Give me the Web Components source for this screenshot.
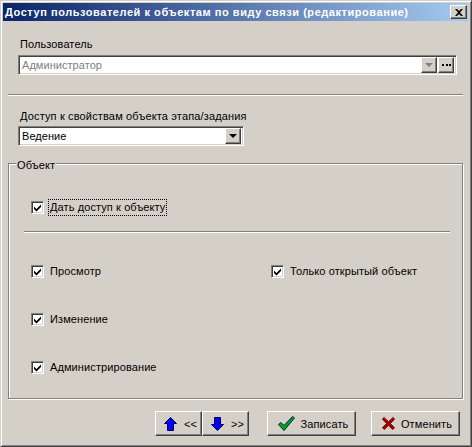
<!DOCTYPE html>
<html>
<head>
<meta charset="utf-8">
<style>
  html, body { margin: 0; padding: 0; background: #d4d0c8; }
  body { font: 11px "Liberation Sans", sans-serif; color: #000; }
</style>
</head>
<body>
<win-dialog caption="Доступ пользователей к объектам по виду связи (редактирование)">
  <win-label>Пользователь</win-label>
  <win-combo value="Администратор" disabled more style="width:439px;margin-top:4px"></win-combo>
  <win-sep style="margin:19px 7px 0 -10px"></win-sep>
  <win-label style="margin-top:14px;letter-spacing:.15px">Доступ к свойствам объекта этапа/задания</win-label>
  <win-combo value="Ведение" style="width:226px;margin-top:3px"></win-combo>
  <win-group caption="Объект" style="margin:17px 7px 0 -10px">
    <win-check focused>Дать доступ к объекту</win-check>
    <win-sep class="inner"></win-sep>
    <div class="rows">
      <win-check>Просмотр</win-check>
      <win-check>Только открытый объект</win-check>
      <win-check>Изменение</win-check>
      <span></span>
      <win-check>Администрирование</win-check>
    </div>
  </win-group>
  <footer>
    <win-button kind="up">&lt;&lt;</win-button>
    <win-button kind="down">&gt;&gt;</win-button>
    <win-button kind="ok" class="wide">Записать</win-button>
    <win-button kind="cancel" class="wide">Отменить</win-button>
  </footer>
  <style>
    win-dialog .rows { display: grid; grid-template-columns: 240px 1fr; grid-auto-rows: 48px; margin: 31px 0 0 22px; }
    win-dialog footer { display: flex; margin: 12px 0 0 137px; }
    win-dialog footer .wide { width: 89px; margin-left: 18px; padding-left: 3px; gap: 6px; }
    win-dialog footer .wide + .wide { margin-left: 15px; }
    win-sep.inner { margin: 13px 12px 0 15px; }
    win-group > win-check { margin: 36px 0 0 22px; }
  </style>
</win-dialog>

<script>
const ICONS = {
  up: '<svg width="13" height="14" viewBox="0 0 13 14"><path d="M6.500 0.500 12.500 6.500H9.500V13.500H3.500V6.500H0.500Z" fill="#00f" stroke="#000050" stroke-width="1"/></svg>',
  down: '<svg width="13" height="14" viewBox="0 0 13 14"><path d="M3.500 0.500H9.500V7.500H12.500L6.500 13.500 0.500 7.500H3.500Z" fill="#00f" stroke="#000050" stroke-width="1"/></svg>',
  ok: '<svg width="17" height="15" viewBox="0 0 17 15"><path d="M0.500 8.500 3 6.500 6 9.500 14.500 0.500 16.500 2 6 14.500Z" fill="#00a800" stroke="#002060" stroke-width="1"/></svg>',
  cancel: '<svg width="13" height="15" viewBox="0 0 14 15"><path d="M2 1 7 5.500 12 1 13.500 3 9 7.500 13.500 12 11.500 14 7 9.500 2.500 14 0.500 12 5 7.500 0.500 3Z" fill="#a00000" stroke="#700000" stroke-width="1"/></svg>'
};

const SUNKEN = 'border:1px solid; border-color:#808080 #fff #fff #808080; box-shadow: inset 1px 1px 0 #404040, inset -1px -1px 0 #d4d0c8;';
const RAISED = 'border:1px solid; border-color:#fff #404040 #404040 #fff; box-shadow: inset -1px -1px 0 #808080;';

class WinDialog extends HTMLElement {
  constructor() {
    super();
    this.attachShadow({ mode: "open" }).innerHTML = `
      <style>
        :host { display: block; box-sizing: border-box; width: 472px; height: 447px; padding: 1px;
          background: #d4d0c8; border: 1px solid; border-color: #d4d0c8 #404040 #404040 #d4d0c8;
          box-shadow: inset 1px 1px 0 #fff, inset -1px -1px 0 #808080; overflow: hidden; }
        .title { margin: 1px 2px 0 1px; height: 18px; display: flex; align-items: center; justify-content: space-between;
          background: linear-gradient(90deg, #0a246a, #a6caf0); color: #fff; font-weight: bold; font-size: 11px; padding: 0 1px 0 2px; letter-spacing: .55px; white-space: nowrap; }
        .close { box-sizing: border-box; width: 17px; height: 14px; background: #d4d0c8; display: flex; align-items: center; justify-content: center; ${RAISED} }
        main { padding: 17px 0 0 16px; }
      </style>
      <div class="title"><span id="cap"></span><span class="close"><svg width="8" height="7" viewBox="0 0 8 7"><path d="M0 0H2L4 2 6 0H8L5 3.500 8 7H6L4 5 2 7H0L3 3.500Z" fill="#000"/></svg></span></div>
      <main><slot></slot></main>`;
    this.shadowRoot.getElementById("cap").textContent = this.getAttribute("caption");
  }
}

class WinLabel extends HTMLElement {
  constructor() {
    super();
    this.attachShadow({ mode: "open" }).innerHTML = `
      <style>:host { display: block; height: 13px; line-height: 13px; margin-left: 2px; letter-spacing: .1px; white-space: nowrap; }</style><slot></slot>`;
  }
}

class WinCombo extends HTMLElement {
  constructor() {
    super();
    const disabled = this.hasAttribute("disabled");
    const more = this.hasAttribute("more");
    this.attachShadow({ mode: "open" }).innerHTML = `
      <style>
        :host { display: block; box-sizing: border-box; height: 20px; background: #fff; ${SUNKEN} padding: 2px; }
        .in { display: flex; height: 100%; align-items: center; }
        .val { flex: 1; padding-left: 1px; letter-spacing: .05px; color: ${disabled ? "#808080" : "#000"}; }
        .btn { box-sizing: border-box; width: 16px; height: 16px; background: #d4d0c8; display: flex; align-items: center; justify-content: center; ${RAISED} }
        .dots { margin-left: 1px; }
        i { display: block; width: 0; height: 0; border: 4px solid transparent; border-top: 4px solid ${disabled ? "#808080" : "#000"}; border-bottom: 0; }
        b { display: block; width: 9px; height: 2px; background: repeating-linear-gradient(90deg, #000 0 2px, transparent 2px 3.500px); }
      </style>
      <div class="in"><span class="val">${this.getAttribute("value")}</span>
        <span class="btn"><i></i></span>
        ${more ? '<span class="btn dots"><b></b></span>' : ""}
      </div>`;
  }
}

class WinSep extends HTMLElement {
  constructor() {
    super();
    this.attachShadow({ mode: "open" }).innerHTML = `
      <style>:host { display: block; height: 1px; background: #808080; border-bottom: 1px solid #fff; }</style>`;
  }
}

class WinGroup extends HTMLElement {
  constructor() {
    super();
    this.attachShadow({ mode: "open" }).innerHTML = `
      <style>
        :host { display: block; box-sizing: border-box; height: 236px; border: 1px solid #808080; box-shadow: inset 1px 1px 0 #fff, 1px 1px 0 #fff; position: relative; }
        .cap { position: absolute; top: -5px; left: 7px; padding: 0 1px; background: #d4d0c8; line-height: 13px; letter-spacing: .1px; }
      </style>
      <span class="cap">${this.getAttribute("caption")}</span><slot></slot>`;
  }
}

class WinCheck extends HTMLElement {
  constructor() {
    super();
    this.attachShadow({ mode: "open" }).innerHTML = `
      <style>
        :host { display: flex; align-items: flex-start; height: 18px; white-space: nowrap; }
        .box { box-sizing: border-box; width: 13px; height: 13px; margin-top: 1px; background: #fff; ${SUNKEN} display: flex; }
        .txt { margin-left: 4px; padding: 1px; line-height: 13px; letter-spacing: .1px; border: 1px solid transparent; height: 13px; margin-top: -1px; }
        :host([focused]) .txt { border: 1px dotted #000; }
      </style>
      <span class="box"><svg width="9" height="9" viewBox="0 0 9 9" style="margin:1px"><path d="M1 3.500 3.500 6 8 1.500V4L3.500 8.500 1 6Z" fill="#000"/></svg></span>
      <span class="txt"><slot></slot></span>`;
  }
}

class WinButton extends HTMLElement {
  constructor() {
    super();
    this.attachShadow({ mode: "open" }).innerHTML = `
      <style>
        :host { display: flex; box-sizing: border-box; width: 47px; height: 25px; padding-left: 4px; align-items: center; justify-content: center; gap: 7px; background: #d4d0c8; letter-spacing: .1px; white-space: nowrap; ${RAISED} }
      </style>
      ${ICONS[this.getAttribute("kind")]}<span><slot></slot></span>`;
  }
}

customElements.define("win-dialog", WinDialog);
customElements.define("win-label", WinLabel);
customElements.define("win-combo", WinCombo);
customElements.define("win-sep", WinSep);
customElements.define("win-group", WinGroup);
customElements.define("win-check", WinCheck);
customElements.define("win-button", WinButton);
</script>
</body>
</html>
